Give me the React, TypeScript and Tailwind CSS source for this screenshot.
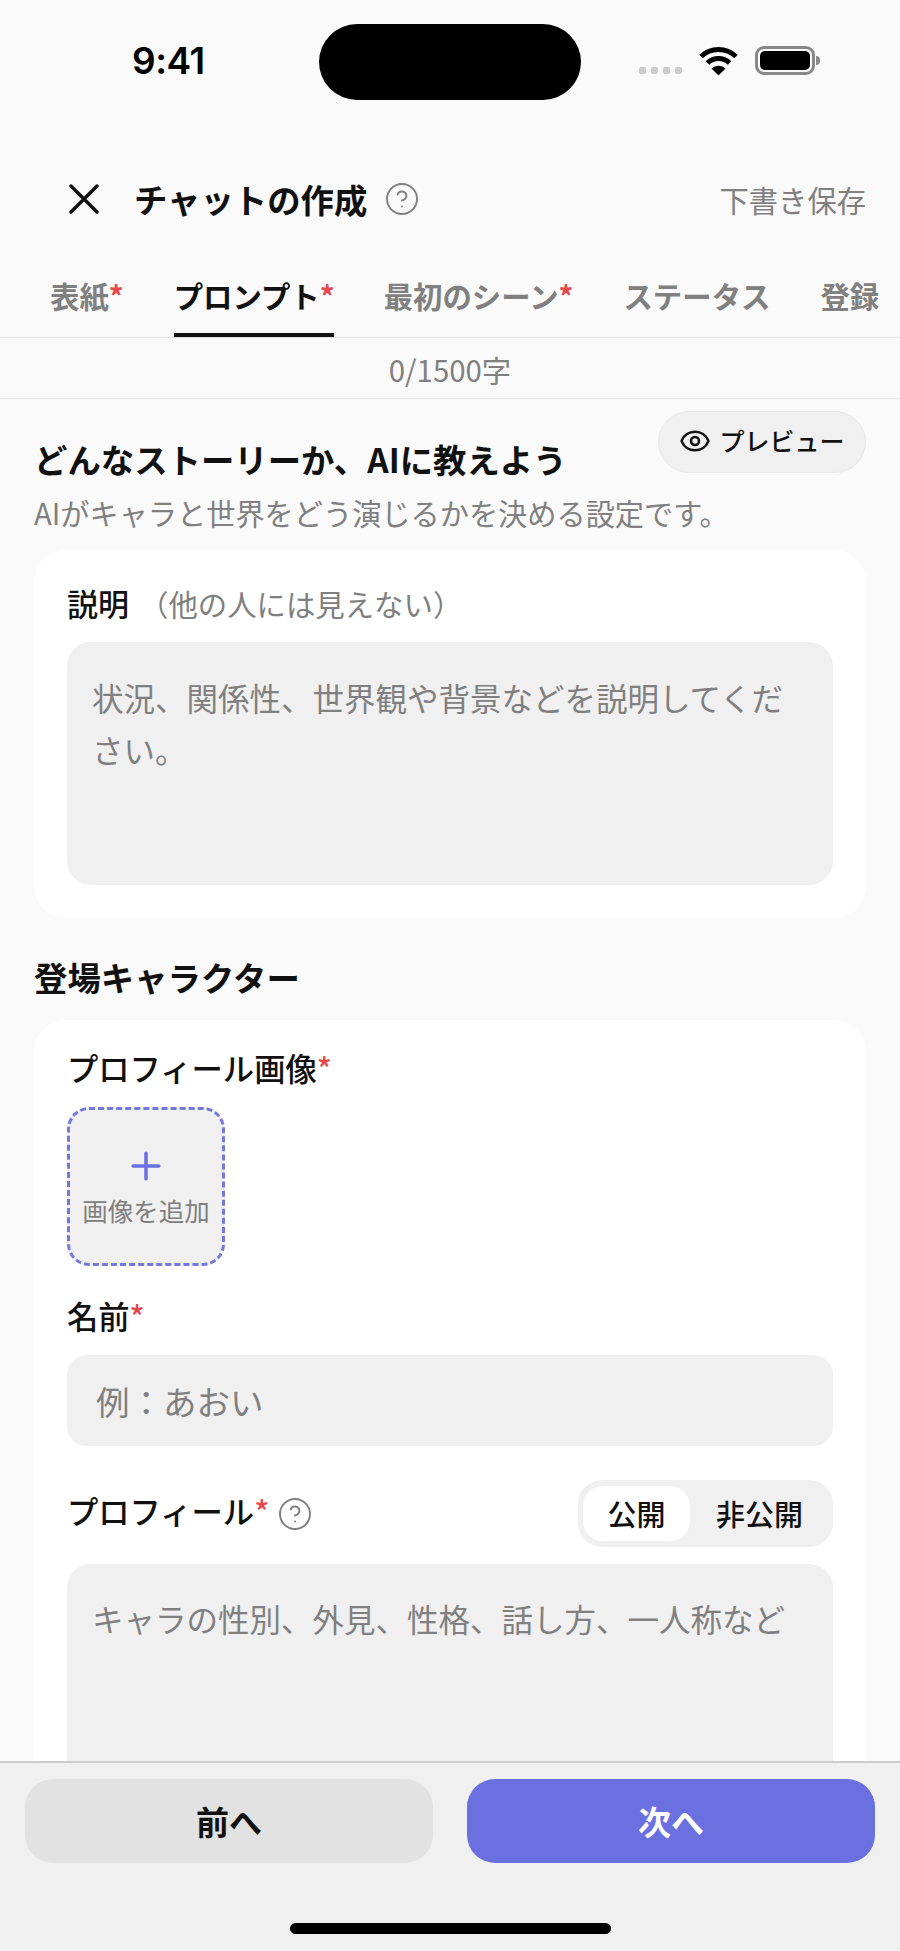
import { CircleHelp, Eye, Plus } from "lucide-react";
import React from "react";

const Star = () => <span className="text-[#e5484d]">*</span>;

const Help = () => (
  <CircleHelp className="w-[36px] h-[36px] text-[#808080]" strokeWidth={1.3} />
);

const Wifi = () => (
  <svg width="39" height="29" viewBox="0 0 39 29" fill="none">
    <path d="M2 10.5A25.5 25.5 0 0 1 37 10.5" stroke="#000" strokeWidth="5" />
    <path d="M8.5 17A16 16 0 0 1 30.5 17" stroke="#000" strokeWidth="5" />
    <path d="M12.5 22.5A10 10 0 0 1 26.5 22.5L19.5 29.5Z" fill="#000" />
  </svg>
);

const StatusBar = () => (
  <div className="h-[124px] shrink-0 flex items-start pl-[132px] pt-[24px]">
    <div className="w-[187px] h-[74px] flex items-center font-['Inter',sans-serif] text-[37px] leading-[44px] font-semibold text-black -tracking-[0.5px]">
      9:41
    </div>
    <div className="w-[262px] h-[76px] rounded-full bg-black" />
    <div className="flex ml-[58px] mt-[22px] h-[29px]">
      <div className="flex gap-[5px] mt-[21px] mr-[17px]">
        {[0, 1, 2, 3].map((i) => (
          <div key={i} className="w-[7px] h-[7px] rounded-[2px] bg-[#cccccc]" />
        ))}
      </div>
      <Wifi />
      <div className="ml-[17px] w-[60px] h-[29px] rounded-[9px] border-[3px] border-[#888888] p-[2px]">
        <div className="w-full h-full rounded-[5px] bg-black" />
      </div>
      <div className="ml-[1px] mt-[10px] w-[4px] h-[9px] rounded-r-full bg-[#888888]" />
    </div>
  </div>
);

const Header = () => (
  <div className="h-[150px] shrink-0 flex items-center justify-between pl-[69px] pr-[34px]">
    <div className="flex items-center">
      <svg width="30" height="30" viewBox="0 0 30 30" fill="none">
        <path d="M2 2L28 28M28 2L2 28" stroke="#111" strokeWidth="3.4" strokeLinecap="round" />
      </svg>
      <div className="ml-[35px] text-[33.4px] leading-[44px] font-bold text-[#111]">チャットの作成</div>
      <div className="ml-[17px]">
        <Help />
      </div>
    </div>
    <div className="text-[29.3px] leading-[40px] text-[#808080]">下書き保存</div>
  </div>
);

const Tabs = () => (
  <div className="h-[64px] shrink-0 flex pl-[50px] gap-[50px] border-b border-[#e5e5e5] overflow-hidden">
    <div className="h-[42px] text-[29.4px] leading-[42px] font-bold text-[#808080] whitespace-nowrap">表紙<Star /></div>
    <div className="h-[63px] border-b-[4px] border-[#111] text-[29.4px] leading-[42px] font-bold text-[#111] whitespace-nowrap w-[160px]">プロンプト<Star /></div>
    <div className="h-[42px] text-[29.4px] leading-[42px] font-bold text-[#808080] whitespace-nowrap">最初のシーン<Star /></div>
    <div className="h-[42px] text-[29.4px] leading-[42px] font-bold text-[#808080] whitespace-nowrap">ステータス</div>
    <div className="h-[42px] text-[29.4px] leading-[42px] font-bold text-[#808080] whitespace-nowrap">登録</div>
  </div>
);

const Prompt = () => (
  <>
    <div className="flex items-end justify-between h-[70px]">
      <div className="pb-[2px] text-[33.4px] leading-[40px] font-bold text-[#111] whitespace-nowrap">どんなストーリーか、AIに教えよう</div>
      <div className="mb-[8px] w-[208px] h-[62px] rounded-full bg-[#f0f0f0] border border-[#e8e8e8] flex items-center justify-center gap-[8px] pb-[2px] text-[25px] font-medium text-[#111]">
        <Eye className="w-[32px] h-[32px]" strokeWidth={1.9} />
        プレビュー
      </div>
    </div>
    <div className="mt-[11px] text-[29.2px] leading-[40px] text-[#808080]">AIがキャラと世界をどう演じるかを決める設定です。</div>
    <div className="mt-[18px] rounded-[32px] bg-white px-[33px] pt-[33px] pb-[33px]">
      <div className="text-[31px] leading-[40px] font-medium text-[#111]">
        説明
        <span className="ml-[10px] text-[29.4px] font-normal text-[#808080]">（他の人には見えない）</span>
      </div>
      <div className="mt-[19px] h-[243px] rounded-[24px] bg-[#f0f0f0] pl-[25px] pr-[44px] pt-[29px] text-[31.5px] leading-[52px] text-[#808080]">
        状況、関係性、世界観や背景などを説明してください。
      </div>
    </div>
  </>
);

const Character = () => (
  <>
    <div className="mt-[37px] mb-[21px] text-[33.4px] leading-[44px] font-bold text-[#111]">登場キャラクター</div>
    <div className="rounded-[32px] bg-white px-[33px] pt-[28px] pb-[34px]">
      <div className="text-[31.3px] leading-[40px] font-medium text-[#111]">プロフィール画像<Star /></div>
      <div className="mt-[19px] w-[158px] h-[159px] rounded-[22px] bg-[#f0f0f0] border-[3px] border-dashed border-[#7478dc] flex flex-col items-center">
        <Plus className="mt-[34px] w-[44px] h-[44px] text-[#6b70e0]" strokeWidth={1.9} />
        <div className="mt-[6px] text-[25.5px] leading-[32px] text-[#808080] whitespace-nowrap">画像を追加</div>
      </div>
      <div className="mt-[30px] text-[31.3px] leading-[40px] font-medium text-[#111]">名前<Star /></div>
      <div className="mt-[19px] h-[91px] rounded-[20px] bg-[#f0f0f0] flex items-center pl-[29px] text-[33.5px] leading-[44px] text-[#808080]">
        例：あおい
      </div>
      <div className="mt-[34px] flex items-center justify-between h-[67px]">
        <div className="flex items-center gap-[8px]">
          <div className="pb-[5px] text-[31.3px] leading-[40px] font-medium text-[#111]">プロフィール<Star /></div>
          <Help />
        </div>
        <div className="w-[255px] h-[67px] rounded-[24px] bg-[#f0f0f0] flex items-center pl-[5px] text-[29px] font-medium text-[#111]">
          <div className="w-[107px] h-[55px] rounded-[20px] bg-white flex items-center justify-center">公開</div>
          <div className="flex-1 flex items-center justify-center pr-[4px]">非公開</div>
        </div>
      </div>
      <div className="mt-[17px] h-[400px] rounded-[24px] bg-[#f0f0f0] pl-[25px] pr-[44px] pt-[28px] text-[31.5px] leading-[52px] text-[#808080]">
        キャラの性別、外見、性格、話し方、一人称など
      </div>
    </div>
  </>
);

const Footer = () => (
  <div className="h-[190px] shrink-0 bg-[#f0f0f0] border-t-2 border-[#cccccc] flex flex-col items-center">
    <div className="mt-[16px] w-full px-[25px] flex justify-between">
      <div className="w-[408px] h-[84px] pt-[2px] rounded-[28px] bg-[#e2e2e2] flex items-center justify-center text-[33px] font-bold text-[#111]">前へ</div>
      <div className="w-[408px] h-[84px] pt-[2px] rounded-[28px] bg-[#6b70e0] flex items-center justify-center text-[33px] font-bold text-white">次へ</div>
    </div>
    <div className="mt-[60px] w-[321px] h-[11px] rounded-full bg-black" />
  </div>
);

export default function App() {
  return (
    <div className="w-[900px] h-[1951px] bg-[#fafafa] flex flex-col overflow-hidden font-['Noto_Sans_CJK_JP','Noto_Sans',sans-serif]">
      <StatusBar />
      <Header />
      <Tabs />
      <div className="h-[61px] shrink-0 border-b border-[#e5e5e5] flex items-center justify-center text-[29.4px] leading-[40px] pt-[1px] text-[#808080]">0/1500字</div>
      <div className="flex-1 min-h-0 overflow-hidden px-[34px] pt-[12px]">
        <Prompt />
        <Character />
      </div>
      <Footer />
    </div>
  );
}
